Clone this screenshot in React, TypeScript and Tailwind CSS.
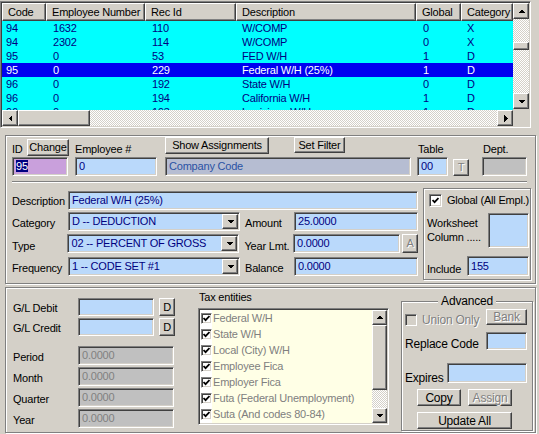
import React from 'react';

const sunken =
  'border border-t-[#808080] border-l-[#808080] border-r-white border-b-white shadow-[inset_1px_1px_0_#404040,inset_-1px_-1px_0_#d4d0c8]';
const raised =
  'border border-t-white border-l-white border-r-[#404040] border-b-[#404040] shadow-[inset_-1px_-1px_0_#808080] bg-[#d4d0c8]';
const etched = 'border border-[#808080] shadow-[inset_1px_1px_0_#ffffff,1px_1px_0_#ffffff]';
const checker =
  'bg-[image:repeating-conic-gradient(#ffffff_0%_25%,#d4d0c8_0%_50%)] bg-[length:2px_2px]';
const disabledText = 'text-[#808080] [text-shadow:1px_1px_0_#ffffff]';

const columns = [
  { label: 'Code', w: 'w-[44px]', pad: 'pl-[4px]' },
  { label: 'Employee Number', w: 'w-[99px]', pad: 'pl-[7px]' },
  { label: 'Rec Id', w: 'w-[91px]', pad: 'pl-[7px]' },
  { label: 'Description', w: 'w-[180px]', pad: 'pl-[6px]' },
  { label: 'Global', w: 'w-[45px]', pad: 'pl-[7px]' },
  { label: 'Category', w: 'w-[52px]', pad: 'pl-[6px]' },
];

const rows = [
  ['94', '1632', '110', 'W/COMP', '0', 'X'],
  ['94', '2302', '114', 'W/COMP', '0', 'X'],
  ['95', '0', '53', 'FED W/H', '1', 'D'],
  ['95', '0', '229', 'Federal W/H (25%)', '1', 'D'],
  ['96', '0', '192', 'State W/H', '0', 'D'],
  ['96', '0', '194', 'California W/H', '1', 'D'],
  ['96', '0', '193', 'Louisiana W/H', '1', 'D'],
];

const taxes = [
  'Federal W/H',
  'State W/H',
  'Local (City) W/H',
  'Employee Fica',
  'Employer Fica',
  'Futa (Federal Unemployment)',
  'Suta (And codes 80-84)',
];

const arrowPoints = {
  up: '1,6 8,6 4.5,2.5',
  down: '1,3 8,3 4.5,6.5',
  left: '6,1 6,8 2.5,4.5',
  right: '3,1 3,8 6.5,4.5',
};

function Arrow({ dir }: { dir: keyof typeof arrowPoints }) {
  return (
    <svg width="9" height="9" viewBox="0 0 9 9" shapeRendering="crispEdges">
      <polygon points={arrowPoints[dir]} fill="#000" />
    </svg>
  );
}

function ScrollBtn({ dir, className = 'w-[16px] h-[16px]' }: { dir: keyof typeof arrowPoints; className?: string }) {
  return (
    <div className={`${raised} ${className} shrink-0 flex items-center justify-center`}>
      <Arrow dir={dir} />
    </div>
  );
}

function Button({
  className,
  children,
  disabled,
}: {
  className: string;
  children: React.ReactNode;
  disabled?: boolean;
}) {
  return (
    <div
      className={`${raised} ${className} shrink-0 flex items-center justify-center whitespace-nowrap leading-none ${
        disabled ? disabledText : ''
      }`}
    >
      {children}
    </div>
  );
}

function Field({
  className,
  bg = 'bg-[#bad9fb]',
  children,
}: {
  className: string;
  bg?: string;
  children?: React.ReactNode;
}) {
  return (
    <div
      className={`${sunken} ${bg} ${className} shrink-0 pl-[3px] text-[#000080] whitespace-nowrap overflow-hidden`}
    >
      {children}
    </div>
  );
}

function Check({ size, disabled }: { size: string; disabled?: boolean }) {
  return (
    <div
      className={`${sunken} ${size} shrink-0 flex items-center justify-center ${
        disabled ? 'bg-[#d4d0c8]' : 'bg-white'
      }`}
    >
      {!disabled && (
        <svg width="7" height="7" viewBox="0 0 7 7">
          <polyline points="0.5,3 2.6,5.2 6.5,1" fill="none" stroke="#000" strokeWidth="1.8" />
        </svg>
      )}
    </div>
  );
}

function Combo({ w, text }: { w: string; text: string }) {
  return (
    <div className={`${sunken} ${w} h-[19px] bg-[#bad9fb] flex shrink-0`}>
      <span className="flex-1 pl-[3px] leading-[17px] text-[#000080] whitespace-nowrap">{text}</span>
      <ScrollBtn dir="down" className="w-[16px] h-[15px] mt-px mr-px" />
    </div>
  );
}

function DataGrid() {
  return (
    <div className={`${sunken} mt-px w-[531px] h-[127px] p-px flex`}>
      <div className="w-[511px] flex flex-col">
        <div className="flex h-[18px]">
          {columns.map((c) => (
            <div key={c.label} className={`${raised} ${c.w} h-[18px] pl-[5px] leading-[16px] whitespace-nowrap`}>
              {c.label}
            </div>
          ))}
        </div>
        <div className="h-[89px] overflow-hidden bg-[#00ffff]">
          {rows.map((r, i) => (
            <div
              key={i}
              className={`flex h-[14px] leading-[14px] ${
                i === 3 ? 'bg-[#0000f0] text-white' : 'text-[#000080]'
              }`}
            >
              {r.map((v, j) => (
                <div key={j} className={`${columns[j].w} ${columns[j].pad} shrink-0 whitespace-nowrap`}>
                  {v}
                </div>
              ))}
            </div>
          ))}
        </div>
        <div className="flex h-[16px]">
          <ScrollBtn dir="left" />
          <div className={`${raised} w-[72px] h-[16px] shrink-0`} />
          <div className={`flex-1 ${checker}`} />
          <ScrollBtn dir="right" />
        </div>
      </div>
      <div className="w-[16px] flex flex-col">
        <ScrollBtn dir="up" />
        <div className={`h-[23px] ${checker}`} />
        <div className={`${raised} h-[8px] w-[16px]`} />
        <div className={`h-[43px] ${checker}`} />
        <ScrollBtn dir="down" />
        <div className="h-[17px]" />
      </div>
    </div>
  );
}

function MainPanel() {
  return (
    <div className={`${etched} ml-[5px] mt-[7px] w-[531px] h-[149px] flex flex-col`}>
      {/* ID / employee / buttons */}
      <div className="flex mt-px h-[19px]">
        <span className="ml-[6px] w-[15px] leading-[19px] mt-[3px]">ID</span>
        <Button className="w-[42px] h-[17px] self-end">Change</Button>
        <span className="ml-[6px] w-[90px] leading-[19px] mt-[3px]">Employee #</span>
        <Button className="w-[104px] h-[17px]">Show Assignments</Button>
        <Button className="ml-[25px] w-[51px] h-[16px]">Set Filter</Button>
        <span className="ml-[73px] w-[65px] leading-[19px] mt-[3px]">Table</span>
        <span className="leading-[19px] mt-[3px]">Dept.</span>
      </div>
      <div className="flex mt-px h-[19px]">
        <Field className="ml-[6px] w-[56px] h-[19px] leading-[17px]" bg="bg-[#c9a0dc]">
          <span className="bg-[#000080] text-white">95</span>
        </Field>
        <Field className="ml-[7px] w-[82px] h-[19px] leading-[17px]">0</Field>
        <div
          className={`${sunken} ml-[8px] w-[246px] h-[19px] bg-[#b6bdd2] text-[#2a52a4] pl-[3px] leading-[17px] shrink-0`}
        >
          Company Code
        </div>
        <Field className="ml-[6px] w-[31px] h-[19px] leading-[17px]">00</Field>
        <Button className="ml-[5px] w-[16px] h-[17px] self-end" disabled>
          T
        </Button>
        <Field className="ml-[13px] w-[45px] h-[19px]" bg="bg-[#c0c0c0]" />
      </div>
      <div className="ml-[6px] mt-[5px] w-[515px] h-[2px] border-t border-t-[#808080] border-b border-b-white" />

      <div className="flex">
        <div className="ml-[6px] w-[406px] flex flex-col">
          <div className="flex mt-[8px] h-[19px]">
            <span className="w-[56px] leading-[19px] mt-px">Description</span>
            <Field className="w-[350px] h-[19px] leading-[17px]">Federal W/H (25%)</Field>
          </div>
          <div className="flex mt-[2px] h-[19px]">
            <span className="w-[56px] leading-[19px] mt-[2px]">Category</span>
            <Combo w="w-[172px]" text="D -- DEDUCTION" />
            <span className="ml-[5px] w-[49px] leading-[19px] mt-[2px]">Amount</span>
            <Field className="w-[124px] h-[19px] leading-[17px]">25.0000</Field>
          </div>
          <div className="flex mt-[3px] h-[19px]">
            <span className="w-[56px] leading-[19px] mt-[3px]">Type</span>
            <Combo w="w-[172px]" text="02 -- PERCENT OF GROSS" />
            <span className="ml-[5px] w-[49px] leading-[19px] mt-[3px]">Year Lmt.</span>
            <Field className="w-[107px] h-[19px] leading-[17px]">0.0000</Field>
            <Button className="ml-[2px] w-[16px] h-[19px]" disabled>
              A
            </Button>
          </div>
          <div className="flex mt-[4px] h-[19px]">
            <span className="w-[56px] leading-[19px] mt-[2px]">Frequency</span>
            <Combo w="w-[172px]" text="1 -- CODE SET #1" />
            <span className="ml-[5px] w-[49px] leading-[19px] mt-[2px]">Balance</span>
            <Field className="w-[124px] h-[19px] leading-[17px]">0.0000</Field>
          </div>
        </div>

        {/* Global group */}
        <div className={`${etched} ml-[5px] mt-[5px] w-[108px] h-[92px] flex flex-col`}>
          <div className="flex items-center mt-[5px] ml-[5px] h-[13px]">
            <Check size="w-[13px] h-[13px]" />
            <span className="ml-[5px] whitespace-nowrap">Global (All Empl.)</span>
          </div>
          <div className="flex mt-[6px]">
            <span className="ml-[3px] w-[61px] pt-[3px] leading-[14px] whitespace-nowrap">
              Worksheet
              <br />
              Column .....
            </span>
            <Field className="w-[41px] h-[35px]" />
          </div>
          <div className="flex mt-[8px] h-[20px]">
            <span className="ml-[3px] w-[40px] leading-[20px] mt-[3px]">Include</span>
            <Field className="w-[62px] h-[20px] leading-[18px]">155</Field>
          </div>
        </div>
      </div>
    </div>
  );
}

function BottomPanel() {
  const gray = ['Period', 'Month', 'Quarter', 'Year'];
  return (
    <div className={`${etched} ml-[5px] mt-[3px] w-[531px] h-[146px] flex`}>
      {/* G/L and totals */}
      <div className="ml-[7px] w-[185px] flex flex-col">
        <div className="flex mt-[10px] h-[18px]">
          <span className="w-[65px] leading-[18px] mt-px">G/L Debit</span>
          <Field className="w-[76px] h-[18px]" />
          <Button className="ml-[5px] w-[16px] h-[18px]">D</Button>
        </div>
        <div className="flex mt-[2px] h-[18px]">
          <span className="w-[65px] leading-[18px] mt-px">G/L Credit</span>
          <Field className="w-[76px] h-[18px]" />
          <Button className="ml-[5px] w-[16px] h-[18px]">D</Button>
        </div>
        {gray.map((g, i) => (
          <div key={g} className={`flex h-[19px] ${i === 0 ? 'mt-[10px]' : 'mt-[2px]'}`}>
            <span className="w-[65px] leading-[19px] mt-[2px]">{g}</span>
            <div
              className={`${sunken} w-[96px] h-[19px] bg-[#c0c0c0] text-[#808080] pl-[3px] leading-[17px] shrink-0`}
            >
              0.0000
            </div>
          </div>
        ))}
      </div>

      {/* Tax entities */}
      <div className="w-[191px] flex flex-col">
        <span className="mt-[2px] h-[14px] leading-[14px] pl-px">Tax entities</span>
        <div className={`${sunken} mt-[4px] h-[117px] w-[191px] p-px flex`}>
          <div className="flex-1 bg-[image:linear-gradient(to_right,#ffffff_12px,#ffffe6_12px)]">
            {taxes.map((t) => (
              <div key={t} className="flex items-center h-[16px]">
                <div className="ml-px">
                  <Check size="w-[11px] h-[11px]" />
                </div>
                <span className="ml-px text-[#808080] whitespace-nowrap">{t}</span>
              </div>
            ))}
          </div>
          <div className="w-[15px] flex flex-col">
            <ScrollBtn dir="up" className="w-[15px] h-[15px]" />
            <div className={`${raised} w-[15px] h-[65px]`} />
            <div className={`flex-1 ${checker}`} />
            <ScrollBtn dir="down" className="w-[15px] h-[15px]" />
          </div>
        </div>
      </div>

      {/* Advanced group */}
      <div className={`${etched} ml-[12px] mt-[13px] w-[132px] h-[130px] flex flex-col`}>
        <div className="flex justify-center -mt-[8px] h-[14px]">
          <span className="bg-[#d4d0c8] px-[3px] leading-[14px] text-[12px]">Advanced</span>
        </div>
        <div className="flex mt-px h-[16px]">
          <div className="ml-[3px] mt-[5px]">
            <Check size="w-[12px] h-[12px]" disabled />
          </div>
          <span className={`ml-[5px] mt-[4px] leading-[14px] ${disabledText} text-[12px]`}>Union Only</span>
          <Button className="ml-auto mr-[5px] w-[41px] h-[16px] text-[12px]" disabled>
            Bank
          </Button>
        </div>
        <div className="flex mt-[7px] h-[18px]">
          <span className="ml-[3px] leading-[18px] mt-[3px] text-[12px]">Replace Code</span>
          <Field className="ml-auto mr-[5px] w-[41px] h-[18px]" />
        </div>
        <div className="flex mt-[13px] h-[20px]">
          <span className="ml-[3px] leading-[20px] mt-[5px] text-[12px]">Expires</span>
          <Field className="ml-auto mr-[5px] w-[80px] h-[20px]" />
        </div>
        <div className="flex mt-[6px] h-[17px]">
          <Button className="ml-[15px] w-[44px] h-[17px] text-[12px]">Copy</Button>
          <Button className="ml-[7px] w-[44px] h-[17px] text-[12px]" disabled>
            Assign
          </Button>
        </div>
        <div className="flex mt-[6px] h-[17px]">
          <Button className="ml-[15px] w-[95px] h-[17px] text-[12px]">Update All</Button>
        </div>
      </div>
    </div>
  );
}

export default function App() {
  return (
    <div className="w-[539px] h-[434px] overflow-hidden bg-[#d4d0c8] font-['Liberation_Sans',Arial,sans-serif] text-[11px] tracking-[-0.2px] text-black select-none">
      <DataGrid />
      <MainPanel />
      <BottomPanel />
    </div>
  );
}
